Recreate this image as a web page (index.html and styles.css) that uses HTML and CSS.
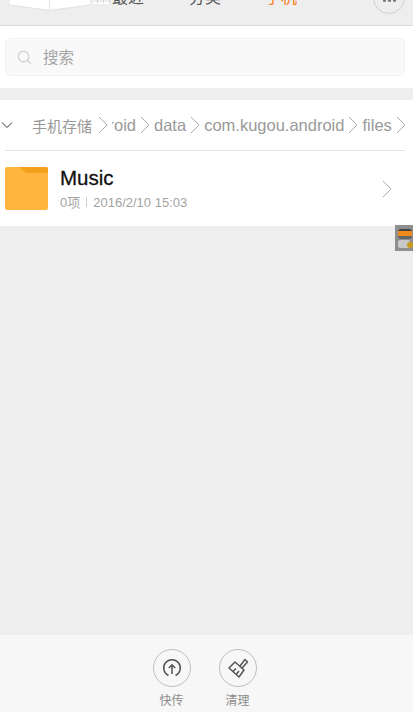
FILE: index.html
```html
<!DOCTYPE html>
<html lang="zh-CN">
	<head>
		<meta charset="utf-8">
		<title>文件管理</title>
		<link rel="stylesheet" href="styles.css">
	</head>
	<body>
		<div id="app">
			<div class="header">
				<svg class="book" width="112" height="12" viewBox="0 0 112 12">
					<path d="M10 0H90V5L50 10 L10 5Z" fill="#fff"/>
					<path d="M49.500 0V10" stroke="#e2e2e2"/>
					<path d="M10 5L49 10.500L90 5" stroke="#e2e2e2" fill="none"/>
					<path d="M93 3H110" stroke="#fff" stroke-width="2"/>
					<path d="M97.500 0V3M103.500 0V3M109.500 0V3" stroke="#d4d4d4"/>
				</svg>
				<div class="tab tab-first">最近</div>
				<div class="tab tab-second">分类</div>
				<div class="tab active">手机</div>
				<div class="more"><span class="dots"></span></div>
			</div>

			<div class="search-wrap">
				<div class="search">
					<svg width="15" height="15" viewBox="0 0 16 16" fill="none" stroke="#d2d2d2" stroke-width="1.500">
						<circle cx="7" cy="7" r="5.600"/>
						<path d="M11 11L14.800 14.800"/>
					</svg>
					<span class="search-text">搜索</span>
				</div>
			</div>

			<div class="list">
				<div class="crumbs">
					<svg class="toggle" width="12" height="8" viewBox="0 0 12 8" fill="none" stroke="#333" stroke-width="1">
						<path d="M1 1.500L6 6.500L11 1.500"/>
					</svg>
					<span class="crumb crumb-root">手机存储</span>
					<svg class="sep" width="10" height="18" viewBox="0 0 10 18"><path d="M1 1L9 9L1 17"/></svg>
					<span class="crumb crumb-cut"><span>android</span></span>
					<svg class="sep" width="10" height="18" viewBox="0 0 10 18"><path d="M1 1L9 9L1 17"/></svg>
					<span class="crumb">data</span>
					<svg class="sep" width="10" height="18" viewBox="0 0 10 18"><path d="M1 1L9 9L1 17"/></svg>
					<span class="crumb">com.kugou.android</span>
					<svg class="sep" width="10" height="18" viewBox="0 0 10 18"><path d="M1 1L9 9L1 17"/></svg>
					<span class="crumb">files</span>
					<svg class="sep" width="10" height="18" viewBox="0 0 10 18"><path d="M1 1L9 9L1 17"/></svg>
				</div>
				<div class="row">
					<svg class="folder" width="43" height="43" viewBox="0 0 43 43">
						<rect width="43" height="43" rx="2" fill="#ffb53e"/>
						<path d="M14 0H41Q43 0 43 2V6H21Z" fill="#f5a01d"/>
					</svg>
					<div class="info">
						<div class="name">Music</div>
						<div class="meta">0项<i></i>2016/2/10 15:03</div>
					</div>
					<svg class="row-arrow" width="10" height="18" viewBox="0 0 10 18"><path d="M1 1L9 9L1 17"/></svg>
				</div>
			</div>

			<div class="empty"></div>

			<div class="bottom">
				<div class="action">
					<div class="circle">
						<svg width="20" height="20" viewBox="0 0 20 20" fill="none" stroke="#555" stroke-width="1.500">
							<path d="M6.500 17.500A8.300 8.300 0 1 1 13.500 17.500"/>
							<path d="M10 16V7M6.800 10L10 6.800L13.200 10"/>
						</svg>
					</div>
					<span>快传</span>
				</div>
				<div class="action">
					<div class="circle">
						<svg width="22" height="22" viewBox="0 0 22 22" fill="none" stroke="#555" stroke-width="1.500" stroke-linejoin="round">
							<path d="M8 5L17 13L12 20L2 11Z"/>
							<path d="M13 9L18 2.500L20.500 5L15 11"/>
							<path d="M6 14.500L9 11.500M9.500 17L12 14"/>
						</svg>
					</div>
					<span>清理</span>
				</div>
			</div>

			<!-- floating widget from another app -->
			<div class="widget">
				<div class="widget-top"></div>
				<div class="widget-base"></div>
				<div class="widget-dot"></div>
			</div>
		</div>
	</body>
</html>
```

FILE: styles.css
```css
* { box-sizing: border-box; }
html, body { margin: 0; height: 100%; }
body { background-color: #eeeeee; font-family: "Liberation Sans", "Noto Sans CJK SC", sans-serif; overflow: hidden; }
#app { position: relative; height: 712px; display: flex; flex-direction: column; }

.header {
	position: relative;
	flex: none;
	height: 26px;
	display: flex;
	align-items: flex-end;
	background-color: #eeeeee;
	border-bottom: 1px solid #d9d9d9;
	overflow: hidden;
	padding: 0 0 17px 112px;
}
.book { position: absolute; top: 0; left: 0; }
.tab { font-size: 16px; line-height: 20px; color: #555; flex: none; }
.tab-first { width: 77px; }
.tab-second { width: 76px; }
.active { color: #f57c14; }
.more {
	position: absolute;
	top: -18px;
	right: 8px;
	width: 32px;
	height: 32px;
	border: 1px solid #cfcfcf;
	border-radius: 50%;
	display: flex;
	justify-content: center;
	align-items: flex-end;
	padding-bottom: 11px;
}
.dots { width: 3px; height: 3px; border-radius: 50%; background-color: #777; box-shadow: -5px 0 #777, 5px 0 #777; }

.search-wrap { flex: none; height: 62px; background-color: #fff; padding: 12px 8px 12px 5px; }
.search {
	height: 38px;
	display: flex;
	align-items: center;
	gap: 11px;
	padding-left: 11px;
	background-color: #f9f9f9;
	border: 1px solid #f1f1f1;
	border-radius: 6px;
	font-size: 15.500px;
	color: #a5a5a5;
}
.search-text { margin-top: -2px; }

.list { flex: none; margin-top: 12px; height: 126px; background-color: #fff; }
.crumbs {
	height: 51px;
	margin: 0 8px 0 5px;
	display: flex;
	align-items: center;
	white-space: nowrap;
	border-bottom: 1px solid #e3e3e3;
	font-size: 16.500px;
	color: #999;
}
.toggle { margin: 0 19px 0 -4px; flex: none; }
.crumb-root { width: 62px; font-size: 15px; flex: none; }
.crumb-cut { width: 24px; overflow: hidden; display: flex; justify-content: flex-end; flex: none; }
.crumb-cut span { flex: none; }
.sep { margin: 0 4px; fill: none; stroke: #aaa; stroke-width: 1; flex: none; }

.row { height: 75px; display: flex; align-items: center; padding: 0 21px 0 5px; }
.folder { flex: none; }
.info { flex: 1; margin-left: 12px; }
.name { font-size: 20.500px; line-height: 24px; color: #111; -webkit-text-stroke: 0.300px #111; }
.meta { font-size: 13px; line-height: 18px; margin-top: 4px; color: #a3a3a3; }
.meta i { display: inline-block; width: 1px; height: 10px; margin: 0 6px; background-color: #ccc; }
.row-arrow { fill: none; stroke: #aaa; stroke-width: 1; flex: none; }

.empty { flex: 1; }

.bottom {
	flex: none;
	height: 77px;
	display: flex;
	justify-content: center;
	gap: 28px;
	padding: 14px 4px 0 0;
	background-color: #f7f7f7;
}
.action { display: flex; flex-direction: column; align-items: center; width: 38px; font-size: 12px; line-height: 16px; color: #8c8c8c; }
.circle { width: 38px; height: 38px; margin-bottom: 6px; border: 1px solid #bdbdbd; border-radius: 50%; display: flex; align-items: center; justify-content: center; }

.widget { position: absolute; top: 225px; right: 0; width: 18px; height: 26px; background-color: #8f8f8f; overflow: hidden; }
.widget-top { position: absolute; top: 4px; left: 3px; width: 14px; height: 10px; border-radius: 3px; background: linear-gradient(#444 0 20%, #f08a1a 20% 75%, #666 75%); }
.widget-base { position: absolute; top: 15px; left: 3px; width: 12px; height: 8px; border-radius: 2px; background-color: #c9c9c9; }
.widget-dot { position: absolute; top: 17px; right: 0; width: 6px; height: 6px; border-radius: 50%; background-color: #c99a1c; }
```
